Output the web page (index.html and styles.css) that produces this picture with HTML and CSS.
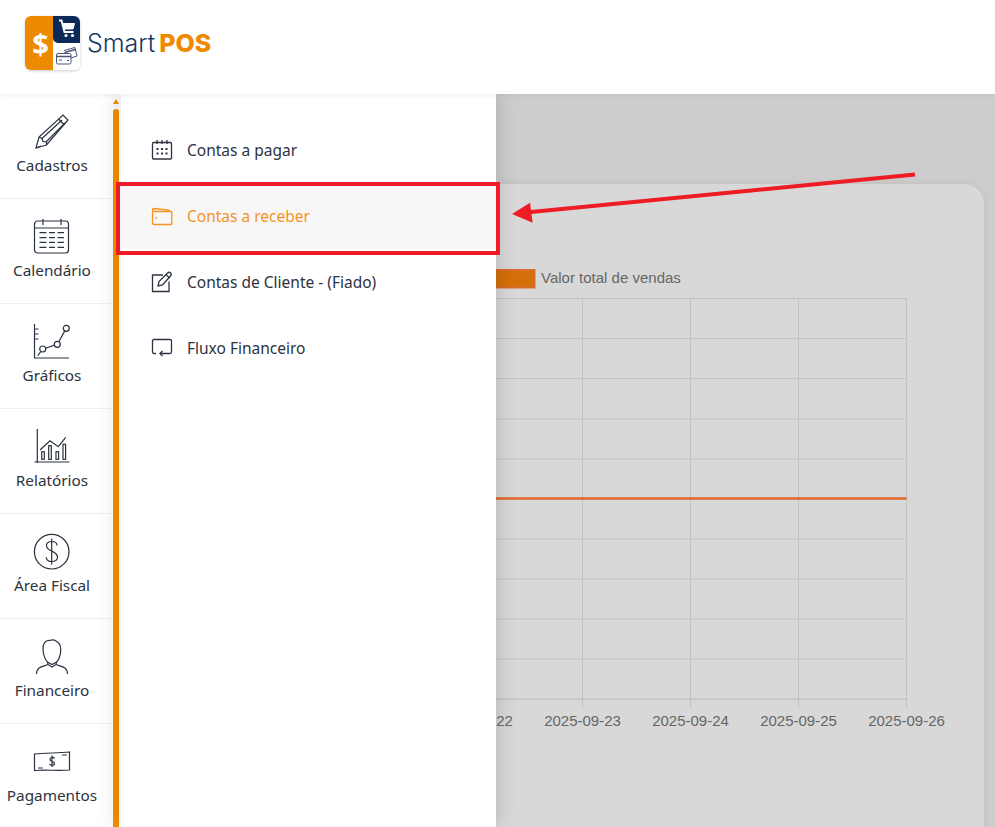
FILE: index.html
```html
<!DOCTYPE html>
<html lang="pt-BR">
<head>
  <meta charset="UTF-8">
  <title>SmartPOS</title>
  <link rel="stylesheet" href="styles.css">
</head>
<body>
  <header class="topbar">
    <div class="logo">
      <div class="logo-mark">
        <div class="logo-dollar">$</div>
        <div class="logo-cart">
          <svg viewBox="0 0 27 27" width="27" height="27" fill="none" stroke="#fff" stroke-width="2">
            <path d="M6 4.500h2.500l3 11.500h9"/>
            <path d="M10 7.500h11.500l-1.500 5.500h-8.500z" fill="#fff" stroke-width="1"/>
            <circle cx="13" cy="19.500" r="1.600" fill="#fff" stroke="none"/>
            <circle cx="19.500" cy="19.500" r="1.600" fill="#fff" stroke="none"/>
          </svg>
        </div>
        <div class="logo-cards">
          <svg viewBox="0 0 27 27" width="27" height="27" fill="#fff" stroke="#4a5578" stroke-width="1">
            <path d="M11 7.500l11-3 2 8.500-6 2"/>
            <path d="M11.500 9.500l11-3" stroke-width="1.300"/>
            <rect x="3.500" y="10.500" width="14.500" height="10.500" rx="1.500"/>
            <path d="M3.500 13.500h14.500" stroke-width="1.300"/>
            <path d="M6 17h3M14 17.500h2"/>
          </svg>
        </div>
      </div>
      <div class="logo-text"><span class="logo-smart">Smart</span><span class="logo-pos">POS</span></div>
    </div>
  </header>

  <div class="main">
    <nav class="sidebar">
      <a class="side-item">
        <svg class="side-icon" viewBox="0 0 40 40">
          <path d="M4 38L7 27L31 5L36 10L14.500 35Z"/>
          <path d="M7 27L10 28.500L11 31.500L14.500 32L14.500 35M4 38L9 36M10 28.500L30 10M14 32L33 13M26.500 9L32 14.500"/>
        </svg>
        <span>Cadastros</span>
      </a>
      <a class="side-item">
        <svg class="side-icon" viewBox="0 0 40 40">
          <rect x="2.500" y="6" width="34" height="32" rx="3"/>
          <path d="M11 4v6M29 4v6M2.500 13h34"/>
          <path d="M7.500 17.700h7M17 17.700h6M25.500 17.700h6.500M7.500 22.700h7M17 22.700h6M25.500 22.700h6.500M7.500 27.300h7M17 27.300h6M25.500 27.300h6.500M7.500 32.300h7M17 32.300h6M25.500 32.300h6.500"/>
        </svg>
        <span>Calendário</span>
      </a>
      <a class="side-item">
        <svg class="side-icon" viewBox="0 0 40 40">
          <path d="M2.500 4v34h34.500M2.500 9h4M2.500 14h4M2.500 19h4"/>
          <circle cx="10.700" cy="29" r="3"/>
          <circle cx="25.300" cy="24.300" r="3"/>
          <circle cx="34.300" cy="8.300" r="3"/>
          <path d="M5.700 35.700L9 31.500M13.600 28.200L22.400 25.100M26.800 21.700L32.800 10.900"/>
        </svg>
        <span>Gráficos</span>
      </a>
      <a class="side-item">
        <svg class="side-icon" viewBox="0 0 40 40">
          <path d="M5.300 4v34M2.500 37h35"/>
          <path d="M8 25L18 15.700L26.300 21.700L33.700 12.300"/>
          <rect x="9.700" y="26.700" width="2.600" height="7.600"/>
          <rect x="16.700" y="20.700" width="2.600" height="13.600"/>
          <rect x="24" y="26.700" width="2.600" height="7.600"/>
          <rect x="31" y="19.300" width="2.600" height="15"/>
        </svg>
        <span>Relatórios</span>
      </a>
      <a class="side-item">
        <svg class="side-icon" viewBox="0 0 40 40">
          <circle cx="19.700" cy="21.700" r="17.300"/>
          <path d="M25 15.500C25 12.500 22.500 11.500 19.700 11.500C16.500 11.500 14.500 13.200 14.500 15.800C14.500 21.800 25.500 20.500 25.500 27C25.500 30 23 31.500 19.700 31.500C16.500 31.500 14.200 30 14.200 27.200M19.700 8.500v26"/>
        </svg>
        <span>Área Fiscal</span>
      </a>
      <a class="side-item">
        <svg class="side-icon" viewBox="0 0 40 40">
          <path d="M11 15C10.500 9 13 5 18 5.500C21 4 28.500 6 28.700 14C29 20 26.500 25.500 24.500 27L20 29.500L15.500 27C13.500 25 11.500 20 11 15Z"/>
          <path d="M15.500 27L16 29.500L20 32L24 29.500L24.500 27M16 29.500C11 31.500 4.500 31.500 4.500 39M24 29.500C29 31.500 35.500 31.500 35.500 39"/>
        </svg>
        <span>Financeiro</span>
      </a>
      <a class="side-item">
        <svg class="side-icon" viewBox="0 0 40 40">
          <path d="M2.500 14C14 13 26 13 37.500 12V30C26 31 14 29.500 2.500 30.500Z"/>
          <path d="M6 28h5M30 15h5M22.500 18.500C22 17 18 17 18 19.500C18 22 22.500 21 22.500 23.500C22.500 26 18 25.500 17.500 24M20 15.500v11.500"/>
        </svg>
        <span>Pagamentos</span>
      </a>
    </nav>

    <div class="scrollbar">
      <div class="scroll-up"></div>
      <div class="scroll-thumb"></div>
    </div>

    <div class="submenu">
      <a class="sub-item">
        <svg class="sub-icon" viewBox="0 0 22 22">
          <rect x="1.500" y="3.500" width="19" height="16.500" rx="1"/>
          <path d="M6 1v4M11 1v4M16 1v4"/>
          <path class="sub-dots" d="M5.500 10h2M10 10h2M14.500 10h2M5.500 14.500h2M10 14.500h2M14.500 14.500h2"/>
        </svg>
        <span>Contas a pagar</span>
      </a>
      <a class="sub-item sub-active">
        <svg class="sub-icon" viewBox="0 0 22 22">
          <path d="M1.500 6.500V18a1.500 1.500 0 0 0 1.500 1.500h17a.800.800 0 0 0 .800-.800V7.300a.800.800 0 0 0-.800-.800H3a1.500 1.500 0 0 1-1.500-1.500 1.500 1.500 0 0 1 1.500-1.500l15 1.500.500 2"/>
          <path d="M4.500 13h1.500"/>
        </svg>
        <span>Contas a receber</span>
      </a>
      <a class="sub-item">
        <svg class="sub-icon" viewBox="0 0 22 22">
          <path d="M12 4H1.500v16.500H18V10.500"/>
          <path d="M7 15l1-4.500L16.500 2c1-1 2-1 3 0s1 2 0 3L11.500 14Z"/>
          <path d="M15 3.500l3.500 3.500"/>
        </svg>
        <span>Contas de Cliente - (Fiado)</span>
      </a>
      <a class="sub-item">
        <svg class="sub-icon" viewBox="0 0 22 22">
          <path d="M5 16.500H3a1.500 1.500 0 0 1-1.500-1.500V4A1.500 1.500 0 0 1 3 2.500h16A1.500 1.500 0 0 1 20.500 4v11a1.500 1.500 0 0 1-1.500 1.500H9"/>
          <path d="M11.500 14L9 16.500l2.500 2.500"/>
        </svg>
        <span>Fluxo Financeiro</span>
      </a>
    </div>

    <div class="content">
      <div class="card">
        <svg class="chart" viewBox="496 184 488 643" width="488" height="643">
          <rect class="legend-box" x="480" y="270" width="54.500" height="17.500"/>
          <text class="chart-label" x="541" y="283">Valor total de vendas</text>
          <g class="grid">
            <path d="M490 298.500H906.500M490 338.500H906.500M490 378.500H906.500M490 419H906.500M490 459H906.500M490 539H906.500M490 579H906.500M490 619H906.500M490 659H906.500"/>
            <path d="M582.500 298V708M690.500 298V708M798.500 298V708M906.500 298V708"/>
          </g>
          <path class="axis" d="M490 699H906.500"/>
          <path class="series" d="M490 498.500H906.500"/>
          <g class="chart-label" text-anchor="middle">
            <text x="474.500" y="726">2025-09-22</text>
            <text x="582.500" y="726">2025-09-23</text>
            <text x="690.500" y="726">2025-09-24</text>
            <text x="798.500" y="726">2025-09-25</text>
            <text x="906.500" y="726">2025-09-26</text>
          </g>
        </svg>
      </div>
    </div>
  </div>

  <!-- marcacoes do tutorial por cima da tela -->
  <svg class="markup" viewBox="0 0 995 827" width="995" height="827">
    <rect class="markup-box" x="118" y="184" width="380" height="69"/>
    <path class="markup-line" d="M915 174.500L526 212.500"/>
    <path class="markup-head" d="M512 214L530 202.700L532.700 222.700Z"/>
  </svg>
</body>
</html>
```

FILE: styles.css
```css
html, body {
  height: 100%;
}
body {
  margin: 0;
  height: 827px;
  overflow: hidden;
  display: flex;
  flex-direction: column;
  position: relative;
  font-family: "Noto Sans", sans-serif;
  background: #fff;
  color: #2d3340;
}

/* topo */
.topbar {
  height: 94px;
  flex: none;
  background: #fff;
  box-shadow: 0 1px 6px rgba(0, 0, 0, 0.08);
  position: relative;
  z-index: 3;
  padding: 16px 0 0 25px;
  box-sizing: border-box;
}
.logo {
  display: flex;
  align-items: center;
  gap: 7px;
}
.logo-mark {
  width: 55px;
  height: 54px;
  border-radius: 6px;
  overflow: hidden;
  display: grid;
  grid-template-columns: 28px 27px;
  grid-template-rows: 27px 27px;
  box-shadow: 0 1px 3px rgba(0, 0, 0, 0.2);
}
.logo-dollar {
  grid-row: 1 / 3;
  background: #ee8a00;
  color: #fff;
  font-family: "Open Sans", sans-serif;
  font-weight: 700;
  font-size: 29px;
  display: flex;
  align-items: center;
  justify-content: center;
  padding-left: 3px;
}
.logo-cart {
  background: #0c2a57;
  border-bottom-left-radius: 5px;
}
.logo-cards {
  background: #fff;
}
.logo-text {
  font-family: "Inter", sans-serif;
  font-size: 25px;
  display: flex;
  align-items: baseline;
  gap: 4px;
}
.logo-smart {
  color: #173a63;
  font-weight: 300;
}
.logo-pos {
  color: #ee8a00;
  font-weight: 800;
}

/* corpo */
.main {
  flex: 1;
  display: flex;
  min-height: 0;
}
.sidebar {
  width: 113px;
  flex: none;
  background: #fff;
  overflow: hidden;
}
.side-item {
  height: 105px;
  box-sizing: border-box;
  width: 111px;
  padding: 16px 7px 0 0;
  border-bottom: 1px solid #eee;
  display: flex;
  flex-direction: column;
  align-items: center;
  font-size: 15.3px;
  line-height: 20px;
}
.side-icon {
  width: 40px;
  height: 40px;
  margin-bottom: 5px;
  fill: none;
  stroke: #2b3240;
  stroke-width: 1.2;
  flex: none;
}

.scrollbar {
  width: 6px;
  flex: none;
  background: #fff;
  display: flex;
  flex-direction: column;
  align-items: center;
  padding-top: 5px;
  box-sizing: border-box;
}
.scroll-up {
  width: 0;
  height: 0;
  border-left: 3.5px solid transparent;
  border-right: 3.5px solid transparent;
  border-bottom: 5px solid #f79200;
}
.scroll-thumb {
  flex: 1;
  width: 6px;
  margin-top: 5px;
  background: #f79200;
  border-radius: 3px 3px 0 0;
}

.submenu {
  width: 377px;
  flex: none;
  box-sizing: border-box;
  padding-top: 23px;
  background: #fff;
  border-left: 2px solid #f2f2f2;
  box-shadow: 0 0 20px rgba(0, 0, 0, 0.18);
  position: relative;
  z-index: 2;
}
.sub-item {
  height: 66px;
  display: flex;
  align-items: center;
  gap: 14px;
  padding-left: 30px;
  font-size: 15.5px;
}
.sub-active {
  background: #f7f7f7;
  color: #f6931e;
}
.sub-icon {
  width: 22px;
  height: 22px;
  fill: none;
  stroke: currentColor;
  stroke-width: 1.3;
  flex: none;
}
.sub-dots {
  stroke-width: 2;
}

/* grafico atras do menu */
.content {
  flex: 1;
  background: #cdcdcd;
  padding: 90px 11px 0 0;
  min-width: 0;
}
.card {
  height: 100%;
  background: #d8d8d8;
  border-top-right-radius: 20px;
  box-shadow: 0 0 8px rgba(0, 0, 0, 0.08);
}
.chart {
  display: block;
}
.legend-box {
  fill: #d4700a;
  stroke: #dd6a2b;
  stroke-width: 2;
}
.chart-label {
  font-family: "Liberation Sans", sans-serif;
  font-size: 15px;
  fill: #666;
}
.grid path {
  fill: none;
  stroke: #c3c3c3;
  stroke-width: 1;
}
.axis {
  fill: none;
  stroke: #b8b8b8;
  stroke-width: 1;
}
.series {
  fill: none;
  stroke: #e0662a;
  stroke-width: 2.5;
}

/* marcacoes */
.markup {
  position: absolute;
  top: 0;
  left: 0;
  z-index: 5;
  pointer-events: none;
}
.markup-box {
  fill: none;
  stroke: #ee1c25;
  stroke-width: 4;
}
.markup-line {
  fill: none;
  stroke: #ee1c25;
  stroke-width: 4;
}
.markup-head {
  fill: #ee1c25;
}
```
